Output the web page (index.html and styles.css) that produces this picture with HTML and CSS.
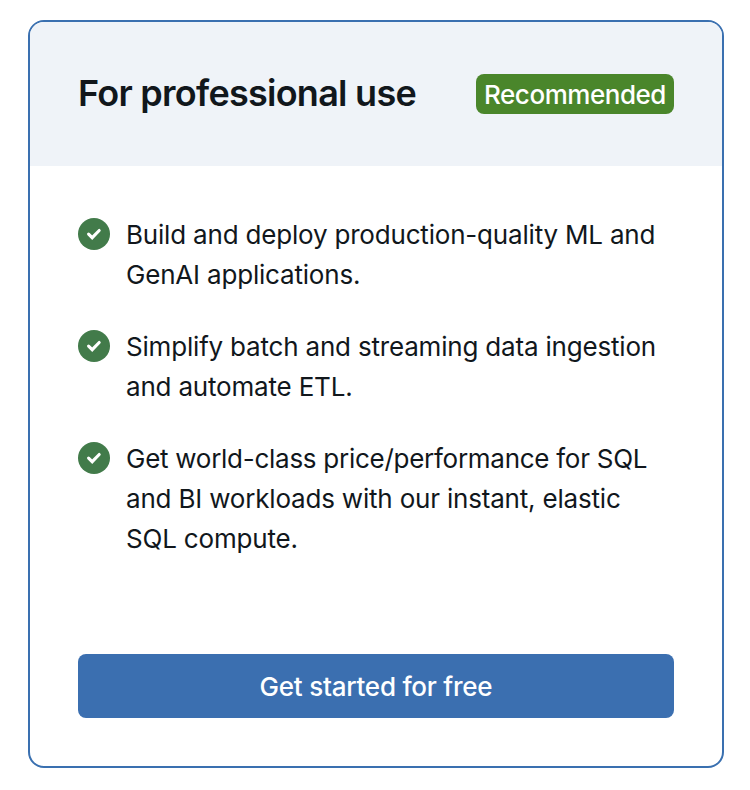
FILE: index.html
```html
<!DOCTYPE html>
<html lang="en">
<head>
<meta charset="utf-8">
<title>For professional use</title>
<link rel="stylesheet" href="styles.css">
</head>
<body>
<main class="card">
  <header class="card-header">
    <h1 class="title">For professional use</h1>
    <span class="badge">Recommended</span>
  </header>
  <ul class="features">
    <li class="feature">
      <svg class="check" viewBox="0 0 32 32" aria-hidden="true"><circle cx="16" cy="16" r="16"/><path d="M10.6 16.2l3.6 3.5 7-7.2"/></svg>
      <p class="text">Build and deploy production-quality ML and<br>GenAI applications.</p>
    </li>
    <li class="feature">
      <svg class="check" viewBox="0 0 32 32" aria-hidden="true"><circle cx="16" cy="16" r="16"/><path d="M10.6 16.2l3.6 3.5 7-7.2"/></svg>
      <p class="text">Simplify batch and streaming data ingestion<br>and automate ETL.</p>
    </li>
    <li class="feature">
      <svg class="check" viewBox="0 0 32 32" aria-hidden="true"><circle cx="16" cy="16" r="16"/><path d="M10.6 16.2l3.6 3.5 7-7.2"/></svg>
      <p class="text"><span class="tight">Get world-class price/performance for SQL</span><br>and BI workloads with our instant, elastic<br>SQL compute.</p>
    </li>
  </ul>
  <button class="cta" type="button">Get started for free</button>
</main>
</body>
</html>
```
FILE: styles.css
```css
* { box-sizing: border-box; }
body {
  margin: 0;
  padding: 20px 26px 22px 28px;
  background: #fff;
  color: #11171c;
  font-family: Inter, "Liberation Sans", sans-serif;
}
.card {
  display: flex;
  flex-direction: column;
  height: 748px;
  border: 2px solid #3a70b0;
  border-radius: 16px;
  overflow: hidden;
}
.card-header {
  display: flex;
  align-items: center;
  justify-content: space-between;
  height: 144px;
  padding: 0 48px;
  background: #eff3f8;
}
.title {
  margin: 0;
  padding-bottom: 2px;
  font-size: 36px;
  line-height: 48px;
  font-weight: 640;
  letter-spacing: -0.74px;
  white-space: nowrap;
}
.badge {
  width: 198px;
  height: 40px;
  padding-top: 1px;
  border-radius: 8px;
  background: #4a862b;
  color: #fff;
  font-size: 26px;
  font-weight: 450;
  line-height: 40px;
  letter-spacing: -0.46px;
  text-align: center;
  white-space: nowrap;
}
.features {
  display: grid;
  gap: 32px;
  margin: 0;
  padding: 49px 48px 0;
  list-style: none;
}
.feature {
  display: flex;
  gap: 16px;
}
.check {
  flex: none;
  width: 32px;
  height: 32px;
  margin-top: 3px;
}
.check circle { fill: #427b4a; }
.check path {
  fill: none;
  stroke: #fff;
  stroke-width: 3.1;
  stroke-linecap: round;
}
.text {
  margin: 0;
  font-size: 26px;
  font-weight: 420;
  line-height: 40px;
  letter-spacing: -0.19px;
  white-space: nowrap;
}
.tight { letter-spacing: -0.27px; }
.cta {
  height: 64px;
  margin: auto 48px 48px;
  border: 0;
  border-radius: 8px;
  background: #3b6fb0;
  color: #fff;
  font: inherit;
  font-size: 26px;
  font-weight: 450;
  letter-spacing: -0.23px;
}
```
